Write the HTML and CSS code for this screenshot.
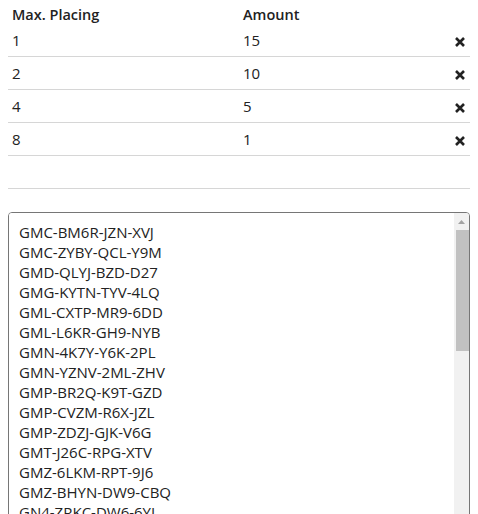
FILE: index.html
```html
<!DOCTYPE html>
<html lang="en">
<head>
  <meta charset="UTF-8" />
  <meta name="viewport" content="width=device-width, initial-scale=1.0" />
  <title>Prize Codes</title>
  <link rel="stylesheet" href="styles.css">
</head>
<body>
  <div class="container">
    <table class="prizes">
      <thead>
        <tr>
          <th class="col-place">Max. Placing</th>
          <th class="col-amount">Amount</th>
          <th class="col-remove"></th>
        </tr>
      </thead>
      <tbody>
        <tr>
          <td>1</td>
          <td>15</td>
          <td class="col-remove"><span class="remove"><svg viewBox="0 0 10 10" width="10" height="10"><path d="M1 1L9 9M9 1L1 9" /></svg></span></td>
        </tr>
        <tr>
          <td>2</td>
          <td>10</td>
          <td class="col-remove"><span class="remove"><svg viewBox="0 0 10 10" width="10" height="10"><path d="M1 1L9 9M9 1L1 9" /></svg></span></td>
        </tr>
        <tr>
          <td>4</td>
          <td>5</td>
          <td class="col-remove"><span class="remove"><svg viewBox="0 0 10 10" width="10" height="10"><path d="M1 1L9 9M9 1L1 9" /></svg></span></td>
        </tr>
        <tr>
          <td>8</td>
          <td>1</td>
          <td class="col-remove"><span class="remove"><svg viewBox="0 0 10 10" width="10" height="10"><path d="M1 1L9 9M9 1L1 9" /></svg></span></td>
        </tr>
        <!-- empty row for a new entry -->
        <tr>
          <td>&nbsp;</td>
          <td></td>
          <td></td>
        </tr>
      </tbody>
    </table>

    <div class="codes-box">
      <textarea class="codes" readonly>GMC-BM6R-JZN-XVJ
GMC-ZYBY-QCL-Y9M
GMD-QLYJ-BZD-D27
GMG-KYTN-TYV-4LQ
GML-CXTP-MR9-6DD
GML-L6KR-GH9-NYB
GMN-4K7Y-Y6K-2PL
GMN-YZNV-2ML-ZHV
GMP-BR2Q-K9T-GZD
GMP-CVZM-R6X-JZL
GMP-ZDZJ-GJK-V6G
GMT-J26C-RPG-XTV
GMZ-6LKM-RPT-9J6
GMZ-BHYN-DW9-CBQ
GN4-ZRKC-DW6-6YL
GN7-QLTP-KXB-3VM
GN9-HCZR-7PD-M4K
GNB-2XJV-RQ8-TLD
GNC-PKM4-ZWY-8HB
GND-VT6Q-LJ2-XNR
GNF-8RBZ-CMK-Q7P
GNH-MW3Y-TPZ-J9C
GNK-DQ7L-XV4-BRZ
GNM-Z2PK-HGC-6WT
GNP-RJ9X-LMQ-4YD
GNQ-6CTB-WZR-KP2
GNR-Y8MV-DJ4-HXL
GNT-KB3Q-9PC-ZMW</textarea>
      <!-- scrollbar drawn by hand, the screenshot hides the native one -->
      <div class="scrollbar">
        <div class="scroll-up"><svg viewBox="0 0 15 17" width="15" height="17"><path d="M4 11h7L7.5 7z" /></svg></div>
        <div class="scroll-thumb"></div>
      </div>
    </div>
  </div>
</body>
</html>
```

FILE: styles.css
```css
body {
  font-family: "Open Sans", Arial, sans-serif;
  font-size: 15px;
  line-height: 20px;
  margin: 0;
  padding: 0;
  background-color: #fff;
  color: #222;
}

.container {
  padding: 0 8px;
}

/* Prize table */
.prizes {
  width: 100%;
  border-collapse: collapse;
}

.prizes th {
  text-align: left;
  font-size: 14.5px;
  line-height: 18px;
  font-weight: 600;
  padding: 6px 4px 0;
}

.prizes td {
  padding: 6px 4px;
  border-bottom: 1px solid #d6d6d6;
}

.col-place {
  width: 223px;
}

.col-remove {
  width: 20px;
  text-align: right;
}

.remove {
  display: inline-block;
  vertical-align: middle;
  margin-right: 1px;
  line-height: 0;
  cursor: pointer;
}

.remove path {
  stroke: #222;
  stroke-width: 2.6;
  fill: none;
}

/* Code list */
.codes-box {
  display: flex;
  height: 330px;
  margin-top: 23px;
  border: 1px solid #767676;
  border-radius: 4px;
  overflow: hidden;
}

.codes {
  flex: 1;
  min-width: 0;
  margin: 0;
  padding: 9px 10px;
  font-family: "Open Sans", Arial, sans-serif;
  font-size: 15px;
  line-height: 20px;
  color: #222;
  border: none;
  outline: none;
  resize: none;
  overflow: hidden;
}

.scrollbar {
  display: flex;
  flex-direction: column;
  width: 15px;
  background-color: #f1f1f1;
}

.scroll-up {
  height: 17px;
  line-height: 0;
}

.scroll-up path {
  fill: #a3a3a3;
}

.scroll-thumb {
  height: 121px;
  margin-left: 2px;
  background-color: #c1c1c1;
}
```
